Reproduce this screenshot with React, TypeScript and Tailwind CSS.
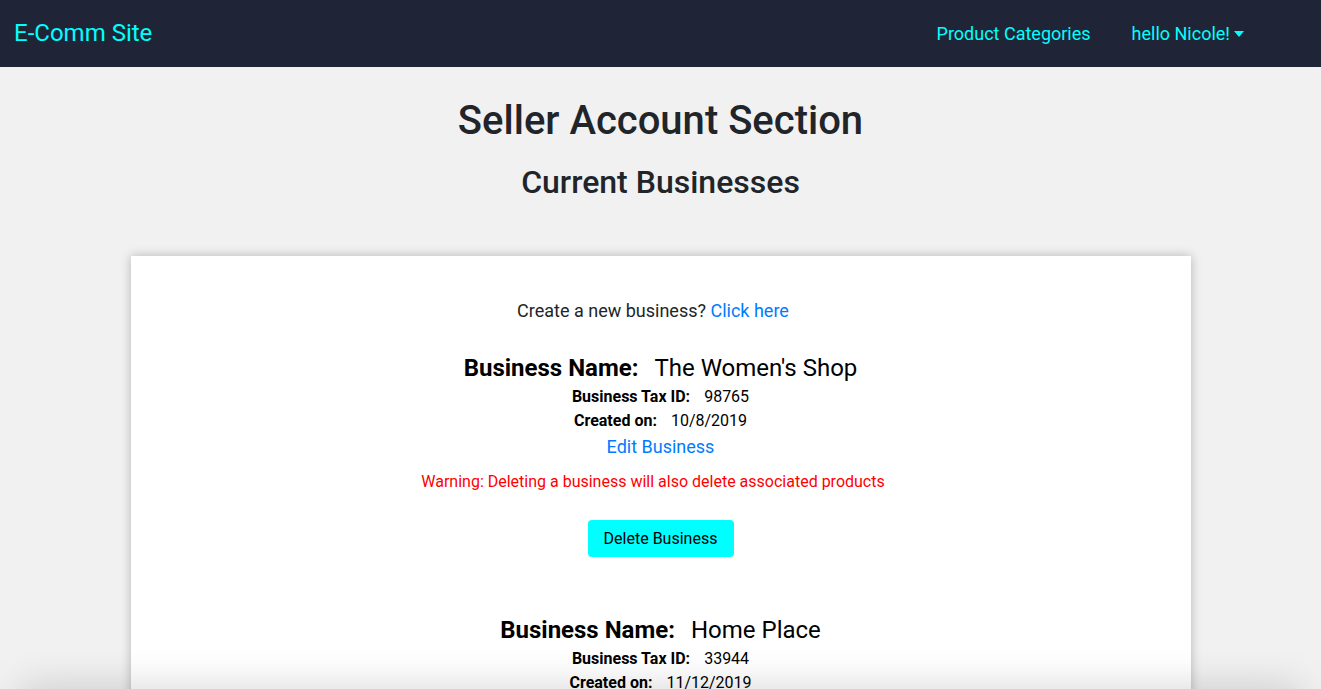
const businesses = [
  { name: "The Women's Shop", taxId: '98765', created: '10/8/2019' },
  { name: 'Home Place', taxId: '33944', created: '11/12/2019' },
];

function BusinessBlock({ name, taxId, created }: { name: string; taxId: string; created: string }) {
  return (
    <div className="flex flex-col items-center pb-[57px]">
      <div className="text-[24px] leading-[32px] text-black">
        <span className="font-bold">Business Name:</span>
        <span className="ml-[16px]">{name}</span>
      </div>
      <div className="text-[16px] leading-[24px] text-black mt-[1px]">
        <span className="font-bold">Business Tax ID:</span>
        <span className="ml-[14px]">{taxId}</span>
      </div>
      <div className="text-[16px] leading-[24px] text-black">
        <span className="font-bold">Created on:</span>
        <span className="ml-[14px]">{created}</span>
      </div>
      <a className="text-[18px] leading-[28px] text-[#007bff]">Edit Business</a>
      <p className="mt-[9px] pr-[15px] text-[16px] leading-[24px] text-[#ff0000]">
        Warning: Deleting a business will also delete associated products
      </p>
      <button className="mt-[26px] h-[37px] w-[146px] rounded-[4px] bg-[#00ffff] text-[16px] text-black">
        Delete Business
      </button>
    </div>
  );
}

export default function App() {
  return (
    <div className="min-h-screen bg-[#f1f1f1] font-['Roboto',sans-serif] text-[#212529]">
      <nav className="h-[67px] bg-[#1f2537] flex items-center justify-between pl-[14px] pr-[77px] pb-[1px]">
        <span className="text-[24px] text-[#00ffff]">E-Comm Site</span>
        <div className="flex items-center gap-[41px] text-[18px] text-[#00ffff]">
          <span>Product Categories</span>
          <span className="flex items-center gap-[4px]">
            hello Nicole!
            <svg width="10" height="6" viewBox="0 0 10 6" className="mt-[1px]">
              <path d="M0 0 L10 0 L5 6 Z" fill="#00ffff" />
            </svg>
          </span>
        </div>
      </nav>

      <h1 className="text-center text-[40px] font-medium leading-[48px] mt-[30px]">Seller Account Section</h1>
      <h2 className="text-center text-[32px] font-medium leading-[38px] mt-[18px]">Current Businesses</h2>

      <div className="mx-auto mt-[55px] w-[1060px] bg-white shadow-[0_0_10px_rgba(0,0,0,0.25)] pt-[41px]">
        <p className="pr-[15px] text-center text-[18px] leading-[28px]">
          Create a new business? <a className="text-[#007bff]">Click here</a>
        </p>
        <div className="mt-[27px]">
          {businesses.map((b) => (
            <BusinessBlock key={b.taxId} {...b} />
          ))}
        </div>
      </div>

      <div className="fixed left-[20px] right-[20px] top-full h-[40px] shadow-[0_0_40px_rgba(0,0,0,0.18)]" />
    </div>
  );
}
